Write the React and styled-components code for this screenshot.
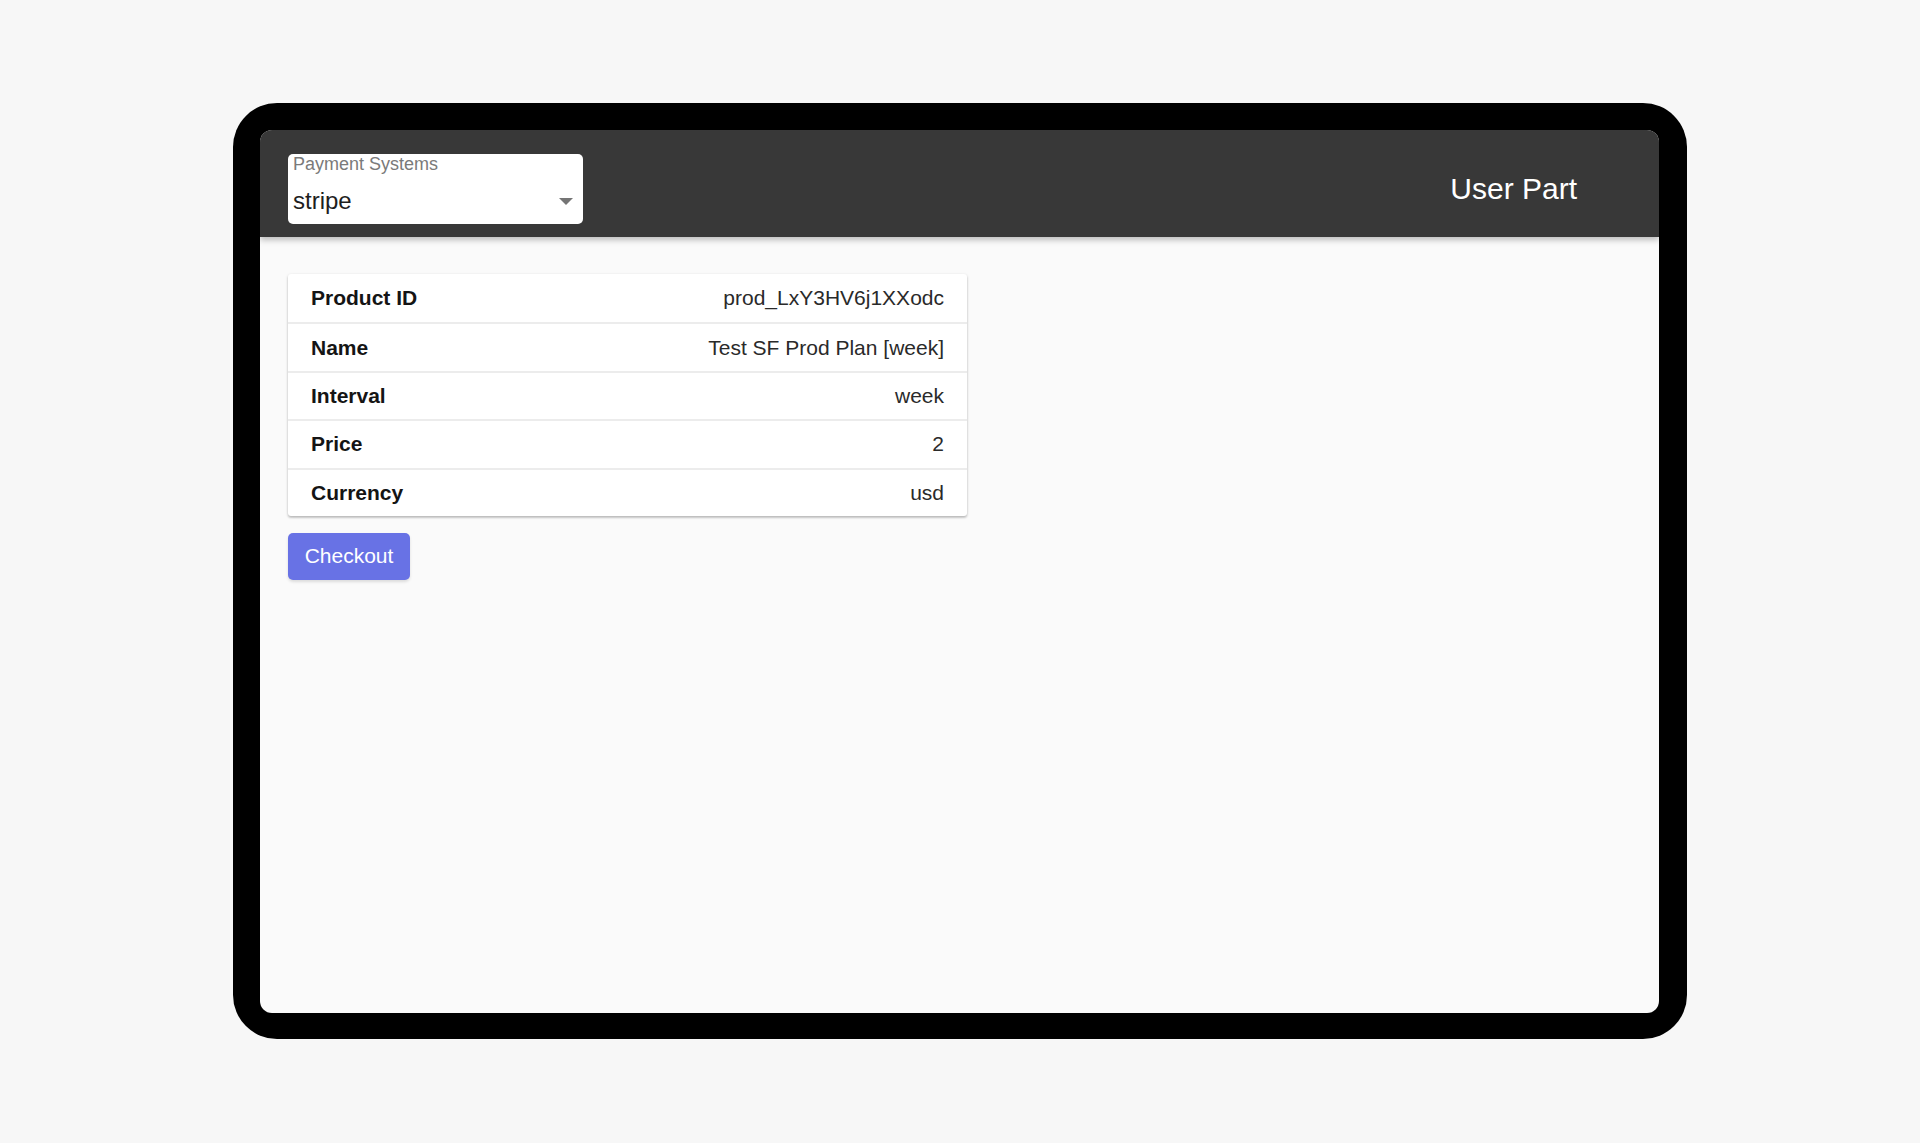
import React from "react";
import styled, { createGlobalStyle } from "styled-components";

const Global = createGlobalStyle`
  html, body { margin: 0; padding: 0; background: #f7f7f7; }
  body { font-family: "Liberation Sans", Arial, Helvetica, sans-serif; }
  * { box-sizing: border-box; }
`;

const Page = styled.div`
  width: 1920px;
  height: 1143px;
  padding: 103px 0 0 233px;
`;

const Device = styled.div`
  width: 1454px;
  height: 936px;
  background: #000;
  border-radius: 44px;
  padding: 27px 28px 26px 27px;
`;

const Screen = styled.div`
  width: 100%;
  height: 100%;
  background: #fafafa;
  border-radius: 12px;
  overflow: hidden;
  display: flex;
  flex-direction: column;
`;

const Header = styled.header`
  height: 107px;
  flex: none;
  background: #383838;
  display: flex;
  align-items: flex-start;
  justify-content: space-between;
  padding: 24px 82px 0 28px;
  box-shadow: 0 3px 6px rgba(0, 0, 0, 0.25);
  position: relative;
  z-index: 1;
`;

const SelectBox = styled.div`
  width: 295px;
  height: 70px;
  background: #fff;
  border-radius: 5px;
  position: relative;
  padding: 0 5px;
`;

const SelectLabel = styled.div`
  font-size: 18px;
  color: #7a7a7a;
  line-height: 18px;
  padding-top: 1px;
`;

const SelectValue = styled.div`
  font-size: 24px;
  color: #1e1e1e;
  line-height: 28px;
  margin-top: 14px;
`;

const Caret = styled.span`
  position: absolute;
  right: 10px;
  top: 44px;
  width: 0;
  height: 0;
  border-left: 7px solid transparent;
  border-right: 7px solid transparent;
  border-top: 7px solid #757575;
`;

const Title = styled.div`
  color: #fff;
  font-size: 30px;
  line-height: 34px;
  margin-top: 18px;
`;

const Content = styled.main`
  padding: 37px 28px;
  display: flex;
  flex-direction: column;
  align-items: flex-start;
`;

const Table = styled.div`
  width: 679px;
  background: #fff;
  border-radius: 3px;
  box-shadow: 0 1px 3px rgba(0, 0, 0, 0.2), 0 2px 2px rgba(0, 0, 0, 0.12);
  overflow: hidden;
`;

const Row = styled.div`
  height: 48.4px;
  display: flex;
  align-items: center;
  justify-content: space-between;
  padding: 0 23px 0 23px;
  font-size: 21px;
  color: #1f1f1f;
  border-top: ${(p) => (p.$first ? "none" : "2px solid #ececec")};
`;

const Key = styled.span`
  font-weight: 700;
  color: #141414;
`;

const Val = styled.span`
  color: #2a2a2a;
`;

const Button = styled.button`
  margin-top: 17px;
  width: 122px;
  height: 47px;
  border: none;
  border-radius: 5px;
  background: #6872e5;
  color: #fff;
  font-family: inherit;
  font-size: 21px;
  box-shadow: 0 2px 3px rgba(0, 0, 0, 0.12);
`;

const rows = [
  ["Product ID", "prod_LxY3HV6j1XXodc"],
  ["Name", "Test SF Prod Plan [week]"],
  ["Interval", "week"],
  ["Price", "2"],
  ["Currency", "usd"],
];

export default function App() {
  return (
    <>
      <Global />
      <Page>
        <Device>
          <Screen>
            <Header>
              <SelectBox>
                <SelectLabel>Payment Systems</SelectLabel>
                <SelectValue>stripe</SelectValue>
                <Caret />
              </SelectBox>
              <Title>User Part</Title>
            </Header>
            <Content>
              <Table>
                {rows.map(([k, v], i) => (
                  <Row key={k} $first={i === 0}>
                    <Key>{k}</Key>
                    <Val>{v}</Val>
                  </Row>
                ))}
              </Table>
              <Button>Checkout</Button>
            </Content>
          </Screen>
        </Device>
      </Page>
    </>
  );
}
